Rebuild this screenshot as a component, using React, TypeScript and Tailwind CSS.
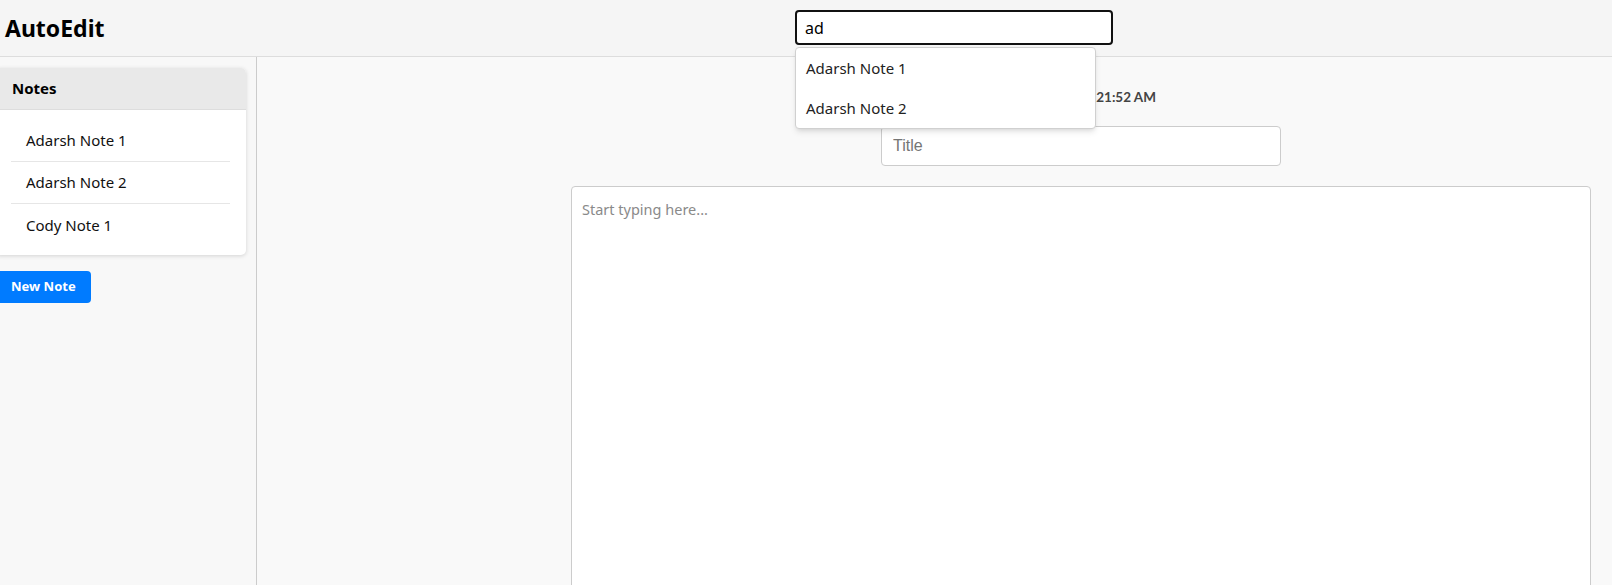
import { useState } from "react";

const notes = ["Adarsh Note 1", "Adarsh Note 2", "Cody Note 1"];

export default function App() {
  const [query, setQuery] = useState("ad");
  const matches = notes.filter((n) => n.toLowerCase().includes(query.toLowerCase()));

  return (
    <div className="flex h-screen flex-col overflow-hidden bg-[#f9f9f9] font-['Noto_Sans',sans-serif] text-black">
      <header className="relative flex h-[57px] shrink-0 items-center border-b border-[#dddddd] bg-[#f5f5f5]">
        <h1 className="pl-[5px] text-[23px] font-bold">AutoEdit</h1>
        <div className="absolute left-[795px] top-[10px]">
          <input
            value={query}
            onChange={(e) => setQuery(e.target.value)}
            className="h-[35px] w-[318px] rounded-[4px] border-2 border-[#111111] bg-white px-[8px] text-[16px] outline-none"
          />
          {query && matches.length > 0 && (
            <ul className="absolute left-0 top-[37px] z-10 w-[301px] rounded-[4px] border border-[#d0d0d0] bg-white shadow-md">
              {matches.map((m) => (
                <li key={m} className="flex h-[40px] items-center px-[10px] text-[15px] text-[#222222]">
                  {m}
                </li>
              ))}
            </ul>
          )}
        </div>
      </header>

      <div className="flex min-h-0 flex-1">
        <aside className="w-[257px] shrink-0 border-r border-[#cccccc] bg-[#f8f8f8] pr-[10px] pt-[11px]">
          <div className="ml-[-5px] overflow-hidden rounded-[5px] bg-white shadow-[0_1px_4px_rgba(0,0,0,0.15)]">
            <div className="flex h-[42px] items-center border-b border-[#dddddd] bg-[#e9e9e9] px-[17px] text-[15px] font-bold">
              Notes
            </div>
            <ul className="px-[16px] pb-[9px] pt-[10px]">
              {notes.map((n, i) => (
                <li
                  key={n}
                  className={`flex h-[42px] items-center pl-[15px] text-[15px] text-[#111111] ${
                    i < notes.length - 1 ? "border-b border-[#e6e6e6]" : ""
                  }`}
                >
                  {n}
                </li>
              ))}
            </ul>
          </div>
          <button className="ml-[-5px] mt-[16px] h-[32px] w-[96px] rounded-[4px] bg-[#007bff] pl-[16px] text-left text-[13px] font-bold text-white">
            New Note
          </button>
        </aside>

        <main className="min-w-0 flex-1 pl-[314px] pr-[21px] pt-[31px]">
          <div className="flex flex-col items-center">
            <p className="w-[400px] whitespace-nowrap pr-[125px] text-right font-['Lato',sans-serif] text-[13.5px] font-bold leading-[18px] text-[#444444]">
              Last saved: 10:21:52 AM
            </p>
            <input
              placeholder="Title"
              className="mt-[20px] h-[40px] w-[400px] rounded-[4px] border border-[#cccccc] bg-white px-[11px] font-['Liberation_Sans',sans-serif] text-[16px] outline-none placeholder:text-[#757575]"
            />
            <textarea
              placeholder="Start typing here..."
              className="mt-[20px] h-[500px] w-full resize-none rounded-[4px] border border-[#cccccc] bg-white px-[10px] pt-[12px] text-[14.5px] outline-none placeholder:text-[#8a8a8a]"
            />
          </div>
        </main>
      </div>
    </div>
  );
}
